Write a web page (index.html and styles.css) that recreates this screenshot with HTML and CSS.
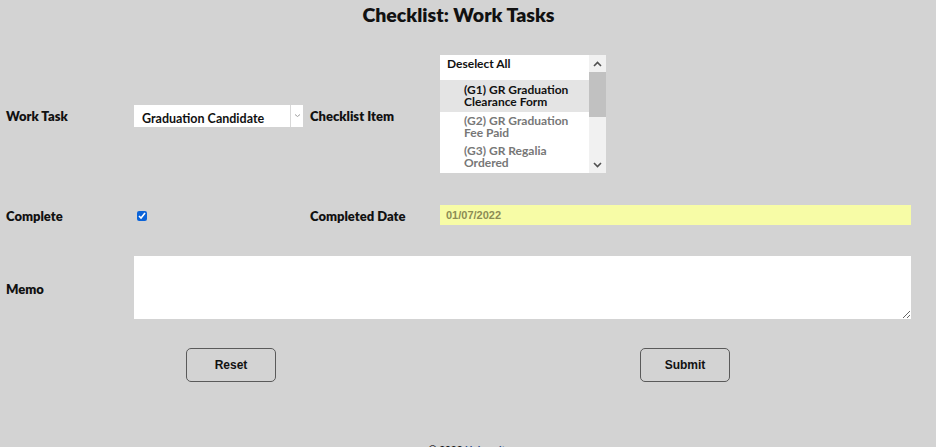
FILE: index.html
```html
<!DOCTYPE html>
<html lang="en">
<head>
  <meta charset="UTF-8" />
  <title>Checklist: Work Tasks</title>
  <link rel="stylesheet" href="styles.css">
</head>
<body>

  <h1 class="page-title">Checklist: Work Tasks</h1>

  <form class="checklist-form">
    <label class="field-label">Work Task</label>
    <div class="select-box">
      <span class="select-value">Graduation Candidate</span>
      <span class="select-arrow">
        <svg width="7" height="5" viewBox="0 0 7 5"><path d="M1 1.5 L3.5 3.5 L6 1.5" fill="none" stroke="#a0a0a0" stroke-width="1"/></svg>
      </span>
    </div>
    <label class="field-label col-3">Checklist Item</label>
    <div class="list-box">
      <div class="list-items">
        <div class="list-option deselect">Deselect All</div>
        <div class="list-option selected">(G1) GR Graduation<br>Clearance Form</div>
        <div class="list-option">(G2) GR Graduation<br>Fee Paid</div>
        <div class="list-option">(G3) GR Regalia<br>Ordered</div>
      </div>
      <div class="scrollbar">
        <span class="scroll-btn">
          <svg width="9" height="6" viewBox="0 0 9 6"><path d="M1 5 L4.5 1.5 L8 5" fill="none" stroke="#505050" stroke-width="1.6"/></svg>
        </span>
        <span class="scroll-thumb"></span>
        <span class="scroll-space"></span>
        <span class="scroll-btn">
          <svg width="9" height="6" viewBox="0 0 9 6"><path d="M1 1 L4.5 4.5 L8 1" fill="none" stroke="#505050" stroke-width="1.6"/></svg>
        </span>
      </div>
    </div>

    <label class="field-label">Complete</label>
    <div class="check-cell"><input type="checkbox" class="check" checked></div>
    <label class="field-label col-3">Completed Date</label>
    <input type="text" class="date-input" value="01/07/2022" readonly>

    <label class="field-label">Memo</label>
    <textarea class="memo"></textarea>
  </form>

  <div class="actions">
    <button type="button" class="btn">Reset</button>
    <button type="button" class="btn">Submit</button>
  </div>

  <footer class="footer">&copy; 2022 <a href="#">University</a></footer>

</body>
</html>
```

FILE: styles.css
```css
body {
  margin: 0;
  padding: 0 25px 0 6px;
  background: #d3d3d3;
  color: #111;
  font-family: Lato, "DejaVu Sans", sans-serif;
  overflow: hidden;
}

.page-title {
  margin: 0;
  text-align: center;
  font-size: 19.5px;
  line-height: 30px;
  font-weight: 800;
  color: #111;
}

.checklist-form {
  display: grid;
  grid-template-columns: 128px 169px 137px 471px;
  grid-template-rows: 119px 20px 63px;
  row-gap: 31px;
  align-items: center;
  margin-top: 25px;
}

.field-label {
  font-size: 13px;
  font-weight: 800;
  padding-top: 2px;
}

.col-3 {
  padding-left: 7px;
}

.select-box {
  display: flex;
  height: 22px;
  margin-top: 2px;
  background: #fff;
  box-sizing: border-box;
}

.select-value {
  flex: 1;
  padding: 6px 0 0 8px;
  font-size: 12.5px;
  font-weight: 700;
}

.select-arrow {
  width: 12px;
  border-left: 1px solid #d8d8d8;
  display: flex;
  align-items: center;
  justify-content: center;
}

.list-box {
  align-self: start;
  display: flex;
  width: 166px;
  height: 118px;
  background: #fff;
}

.list-items {
  flex: 1;
  overflow: hidden;
}

.list-option {
  padding: 3px 0 3px 24px;
  font-size: 12px;
  line-height: 12px;
  font-weight: 700;
  color: #777;
}

.list-option.deselect {
  padding: 3px 0 0 7px;
  height: 25px;
  box-sizing: border-box;
  color: #111;
}

.list-option.selected {
  background: #e4e4e4;
  color: #111;
  padding-top: 4px;
  padding-bottom: 4px;
}

.scrollbar {
  display: flex;
  flex-direction: column;
  width: 17px;
  background: #f1f1f1;
}

.scroll-btn {
  height: 17px;
  display: flex;
  align-items: center;
  justify-content: center;
}

.scroll-thumb {
  height: 45px;
  background: #c1c1c1;
}

.scroll-space {
  flex: 1;
}

.check-cell {
  padding-left: 3px;
  height: 20px;
  display: flex;
  align-items: center;
}

.check {
  width: 10px;
  height: 10px;
  margin: 2px 0 0;
  accent-color: #0b63d8;
}

.date-input {
  height: 20px;
  box-sizing: border-box;
  border: none;
  background: #f7fca6;
  padding: 0 6px;
  font-family: "Liberation Sans", Arial, sans-serif;
  font-size: 11px;
  font-weight: 700;
  color: #8c8c55;
  outline: none;
}

.memo {
  grid-column: 2 / 5;
  height: 63px;
  box-sizing: border-box;
  border: none;
  background: #fff;
  resize: both;
  outline: none;
}

.actions {
  display: flex;
  gap: 364px;
  margin: 29px 0 0 180px;
}

.btn {
  width: 90px;
  height: 34px;
  background: transparent;
  border: 1px solid #5a5a5a;
  border-radius: 5px;
  font-family: "Liberation Sans", Arial, sans-serif;
  font-size: 12px;
  font-weight: 700;
  color: #111;
  cursor: pointer;
}

.footer {
  margin-top: 61px;
  padding-left: 22px;
  text-align: center;
  font-size: 10px;
  font-weight: 700;
}

.footer a {
  color: #2a4a8a;
  text-decoration: none;
}
```
